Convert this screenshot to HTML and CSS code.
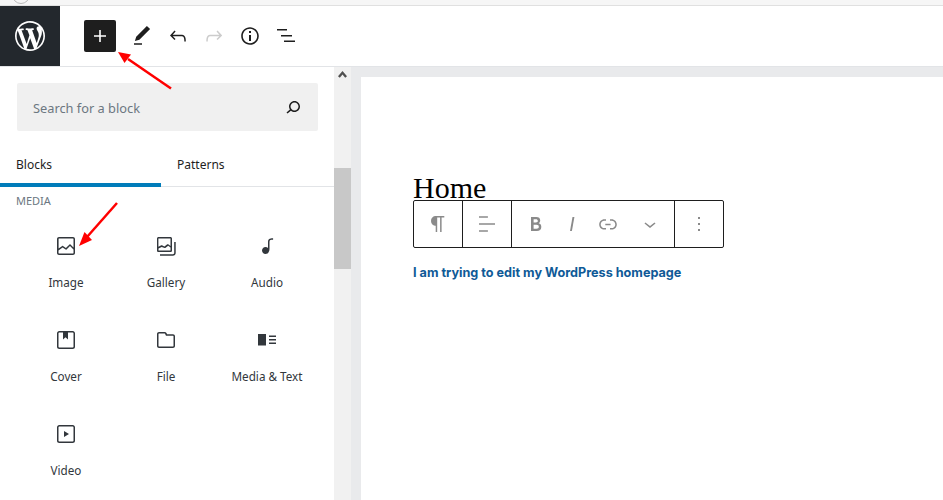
FILE: index.html
```html
<!DOCTYPE html>
<html lang="en">
<head>
    <meta charset="UTF-8">
    <meta name="viewport" content="width=device-width, initial-scale=1.0">
    <title>Edit Page</title>
    <link rel="stylesheet" href="styles.css">
</head>
<body>
    <div class="browser-strip"></div>

    <header class="topbar">
        <a class="wp-logo" href="#">
            <svg width="30" height="30" viewBox="0 0 20 20"><path fill="#fff" fill-rule="evenodd" d="M20 10c0-5.51-4.49-10-10-10C4.48 0 0 4.49 0 10c0 5.52 4.48 10 10 10 5.51 0 10-4.48 10-10zM7.78 15.37L4.37 6.22c.55-.02 1.17-.08 1.17-.08.5-.06.44-1.13-.06-1.11 0 0-1.45.11-2.37.11-.18 0-.37 0-.58-.01C4.12 2.69 6.87 1.11 10 1.11c2.33 0 4.45.87 6.05 2.34-.68-.11-1.65.39-1.65 1.58 0 .74.45 1.36.9 2.1.35.61.55 1.36.55 2.46 0 1.49-1.4 5-1.4 5l-3.03-8.37c.54-.02.82-.17.82-.17.5-.05.44-1.25-.06-1.22 0 0-1.44.12-2.38.12-.87 0-2.33-.12-2.33-.12-.5-.03-.56 1.2-.06 1.22l.92.08 1.26 3.41zM17.41 10c.24-.64.74-1.87.43-4.25.7 1.29 1.05 2.71 1.05 4.25 0 3.29-1.73 6.24-4.4 7.78.97-2.59 1.94-5.2 2.92-7.78zM6.1 18.09C3.12 16.65 1.11 13.53 1.11 10c0-1.3.23-2.48.72-3.59C3.25 10.3 4.67 14.2 6.1 18.09zm4.03-6.63l2.58 6.98c-.86.29-1.76.45-2.71.45-.79 0-1.57-.11-2.29-.33.81-2.38 1.62-4.74 2.42-7.1z"/></svg>
        </a>
        <div class="tools">
            <button class="add-btn">
                <svg width="24" height="24" viewBox="0 0 24 24"><path d="M18 11.2h-5.2V6h-1.6v5.2H6v1.6h5.2V18h1.6v-5.2H18z"/></svg>
            </button>
            <button class="tool-btn">
                <svg width="24" height="24" viewBox="0 0 24 24"><path d="M20.1 5.1L16.9 2 6.2 12.7l-1.3 4.400 4.500-1.300L20.100 5.100zM4 20.800h8v-1.500H4v1.500z"/></svg>
            </button>
            <button class="tool-btn">
                <svg width="24" height="24" viewBox="0 0 24 24"><path d="M18.3 11.7c-.6-.6-1.4-.9-2.3-.9H6.7l2.9-3.3-1.1-1-4.5 5L8.5 16l1-1-2.7-2.7H16c.5 0 .9.2 1.3.5 1 1 1 3.4 1 4.5v.3h1.5v-.2c0-1.5 0-4.3-1.5-5.7z"/></svg>
            </button>
            <button class="tool-btn disabled">
                <svg width="24" height="24" viewBox="0 0 24 24"><path d="M15.6 6.5l-1.1 1 2.9 3.3H8c-.9 0-1.7.3-2.3.9-1.4 1.5-1.4 4.2-1.4 5.6v.2h1.5v-.3c0-1.1 0-3.5 1-4.5.3-.3.7-.5 1.3-.5h9.2L14.5 15l1.1 1.1 4.6-4.6-4.6-5z"/></svg>
            </button>
            <button class="tool-btn">
                <svg width="24" height="24" viewBox="0 0 24 24"><path d="M12 3.2c-4.8 0-8.8 3.9-8.8 8.8 0 4.8 3.9 8.8 8.8 8.8 4.8 0 8.8-3.9 8.8-8.8 0-4.8-4-8.8-8.8-8.8zm0 16c-4 0-7.2-3.3-7.2-7.2C4.8 8 8 4.8 12 4.8s7.2 3.3 7.2 7.2c0 4-3.2 7.2-7.2 7.200zM11 17h2v-6h-2v6zm0-8h2V7h-2v2z"/></svg>
            </button>
            <button class="tool-btn">
                <svg width="24" height="24" viewBox="0 0 24 24"><path d="M3 5h10v1.500H3zM7 11h11v1.500H7zM10 16.500h11V18H10z"/></svg>
            </button>
        </div>
    </header>

    <div class="editor">
        <aside class="inserter">
            <div class="search-box">
                <span class="search-text">Search for a block</span>
                <svg width="24" height="24" viewBox="0 0 24 24"><path d="M13.5 6C10.5 6 8 8.5 8 11.5c0 1.1.3 2.1.9 3l-3.4 3 1 1.1 3.4-2.9c1 .9 2.2 1.4 3.6 1.4 3 0 5.5-2.5 5.5-5.5C19 8.5 16.5 6 13.5 6zm0 9.5c-2.2 0-4-1.8-4-4s1.8-4 4-4 4 1.8 4 4-1.8 4-4 4z"/></svg>
            </div>
            <div class="tabs">
                <div class="tab active">Blocks</div>
                <div class="tab">Patterns</div>
            </div>
            <div class="cat-title">MEDIA</div>
            <div class="block-grid">
                <div class="block-item">
                    <svg width="24" height="24" viewBox="0 0 24 24"><path d="M19 3H5c-1.1 0-2 .9-2 2v14c0 1.1.9 2 2 2h14c1.1 0 2-.9 2-2V5c0-1.1-.9-2-2-2zM5 4.500h14c.3 0 .5.2.5.5v8.400l-3-2.900c-.3-.3-.8-.3-1 0L11.900 14 9 12c-.3-.2-.6-.2-.8 0l-3.600 2.600V5c-.1-.3.1-.5.4-.5zm14 15H5c-.3 0-.5-.2-.5-.5v-2.400l4.100-3 3 1.900c.3.2.7.2.9-.1L16 12l3.500 3.400V19c0 .3-.2.500-.5.500z"/></svg>
                    <span>Image</span>
                </div>
                <div class="block-item">
                    <svg width="24" height="24" viewBox="0 0 24 24"><path d="M20.200 8v11c0 .7-.6 1.200-1.200 1.200H6v1.500h13c1.500 0 2.700-1.200 2.700-2.800V8h-1.500zM18 16.400V4.600c0-.9-.7-1.600-1.600-1.600H4.600C3.700 3 3 3.700 3 4.600v11.800c0 .9.700 1.600 1.600 1.600h11.800c.9 0 1.600-.7 1.600-1.600zM4.500 4.600c0-.1.1-.1.1-.1h11.800c.1 0 .1.1.1.1V12l-2.300-1.700c-.3-.2-.6-.2-.9 0l-2.900 2.100L8 11.300c-.2-.1-.5-.1-.7 0l-2.900 1.500V4.600zm0 11.800v-1.800l3.200-1.700 2.900 1.100c.2.100.5.100.7-.1l2.900-2.100 2.300 1.700v2.900c0 .1-.1.1-.1.1H4.600c0 0-.1 0-.1-.1z"/></svg>
                    <span>Gallery</span>
                </div>
                <div class="block-item">
                    <svg width="24" height="24" viewBox="0 0 24 24"><path d="M17.700 4.300c-1.200 0-2.800 0-3.800 1-.6.600-.9 1.500-.9 2.600V14c-.6-.6-1.500-1-2.500-1C8.600 13 7 14.600 7 16.500S8.600 20 10.500 20c1.500 0 2.800-1 3.300-2.300.5-.8.7-1.800.7-2.700V7.900c0-.7.2-1.200.5-1.600.6-.6 1.800-.6 2.800-.6h.3V4.300h-.4z"/></svg>
                    <span>Audio</span>
                </div>
                <div class="block-item">
                    <svg width="24" height="24" viewBox="0 0 24 24"><path d="M18.700 3H5.300C4 3 3 4 3 5.300v13.400C3 20 4 21 5.300 21h13.400c1.300 0 2.300-1 2.300-2.300V5.300C21 4 20 3 18.700 3zm.8 15.700c0 .4-.4.8-.8.8H5.300c-.4 0-.8-.4-.8-.8V5.300c0-.4.4-.8.8-.8h3.700v6.900l2.500-2.100 2.500 2.100V4.500h4.700c.4 0 .8.4.8.8v13.400z"/></svg>
                    <span>Cover</span>
                </div>
                <div class="block-item">
                    <svg width="24" height="24" viewBox="0 0 24 24"><path d="M19 6.200h-5.900l-.6-1.100C12.100 4.400 11.400 4 10.600 4H5c-1.100 0-2 .9-2 2v12c0 1.100.9 2 2 2h14c1.100 0 2-.9 2-2V8.200c0-1.100-.9-2-2-2zm.5 11.800c0 .3-.2.500-.5.500H5c-.3 0-.5-.2-.5-.5V6c0-.3.2-.5.5-.5h5.600c.2 0 .4.1.4.3l1 1.900H19c.3 0 .5.2.5.5V18z"/></svg>
                    <span>File</span>
                </div>
                <div class="block-item">
                    <svg width="24" height="24" viewBox="0 0 24 24"><path d="M3 6v11.500h8V6H3zm11 1.500h7V9h-7V7.500zm7 5h-7V11h7v1.500zm-7 3.500h7v-1.500h-7V16z"/></svg>
                    <span>Media &amp; Text</span>
                </div>
                <div class="block-item">
                    <svg width="24" height="24" viewBox="0 0 24 24"><path d="M18.700 3H5.300C4 3 3 4 3 5.300v13.400C3 20 4 21 5.300 21h13.400c1.300 0 2.300-1 2.300-2.300V5.300C21 4 20 3 18.700 3zm.8 15.700c0 .4-.4.8-.8.8H5.300c-.4 0-.8-.4-.8-.8V5.300c0-.4.4-.8.8-.8h13.400c.4 0 .8.400.8.8v13.400zM10 15l5-3-5-3v6z"/></svg>
                    <span>Video</span>
                </div>
            </div>
        </aside>

        <div class="scrollbar">
            <div class="scroll-arrow"></div>
            <div class="scroll-thumb"></div>
        </div>

        <main class="canvas-wrap">
            <div class="canvas">
                <h1 class="page-title">Home</h1>
                <div class="block-toolbar">
                    <div class="tb-group">
                        <svg width="24" height="24" viewBox="0 0 24 24"><path d="M18.300 4H9.900v-.1l-.9.2c-2.300.4-4 2.400-4 4.800s1.700 4.400 4 4.800l.7.1V20h1.500V5.500h2.900V20h1.500V5.500h2.700V4z"/></svg>
                    </div>
                    <div class="tb-group">
                        <svg width="24" height="24" viewBox="0 0 24 24"><path d="M4 19.800h8.900v-1.500H4v1.500zm8.900-15.600H4v1.500h8.900V4.200zm-8.900 7v1.500h16v-1.500H4z"/></svg>
                    </div>
                    <div class="tb-group wide">
                        <svg width="24" height="24" viewBox="0 0 24 24"><path d="M14.700 11.300c1-.6 1.500-1.600 1.500-3 0-2.300-1.300-3.400-4-3.400H7v14h5.800c1.400 0 2.500-.3 3.300-1 .8-.7 1.200-1.700 1.200-2.900.1-1.900-.8-3.100-2.600-3.700zm-5.100-4h2.300c.6 0 1.100.1 1.400.4.3.3.5.7.5 1.200s-.2 1-.5 1.200c-.3.3-.8.4-1.400.4H9.600V7.300zm4.600 9c-.4.3-1 .4-1.700.4H9.600v-3.900h2.900c.7 0 1.300.2 1.700.5.4.3.6.8.6 1.500s-.2 1.200-.6 1.500z"/></svg>
                        <svg width="24" height="24" viewBox="0 0 24 24"><path d="M12.500 5L10 19h1.900l2.500-14z"/></svg>
                        <svg width="24" height="24" viewBox="0 0 24 24"><path d="M15.600 7.200H14v1.500h1.600c2 0 3.700 1.700 3.700 3.700s-1.700 3.700-3.700 3.700H14v1.500h1.600c2.800 0 5.200-2.300 5.200-5.200 0-2.900-2.300-5.200-5.200-5.200zM4.700 12.400c0-2 1.700-3.700 3.700-3.700H10V7.200H8.400c-2.900 0-5.200 2.300-5.200 5.200 0 2.900 2.300 5.200 5.200 5.200H10v-1.500H8.400c-2 0-3.700-1.700-3.700-3.700zm4.600.9h5.300v-1.500H9.300v1.500z"/></svg>
                        <svg class="chevron" width="24" height="24" viewBox="0 0 24 24"><path d="M17.500 11.600L12 16l-5.500-4.400.9-1.200L12 14l4.500-3.600 1 1.200z"/></svg>
                    </div>
                    <div class="tb-group last">
                        <svg width="24" height="24" viewBox="0 0 24 24"><path d="M13 19h-2v-2h2v2zm0-6h-2v-2h2v2zm0-6h-2V5h2v2z"/></svg>
                    </div>
                </div>
                <p class="page-text">I am trying to edit my WordPress homepage</p>
            </div>
        </main>
    </div>

    <!-- red arrows drawn over the screenshot -->
    <svg class="arrow-overlay" width="943" height="500" viewBox="0 0 943 500">
        <path class="arrow-line" d="M171 88.500L128 59"/>
        <path class="arrow-head" d="M118 52L131 54.500L124.500 63z"/>
        <path class="arrow-line" d="M117 203L87 237"/>
        <path class="arrow-head" d="M79 246L84.500 232L92 240z"/>
    </svg>
</body>
</html>
```

FILE: styles.css
```css
* {
    box-sizing: border-box;
}
html, body {
    height: 100%;
}
body {
    margin: 0;
    padding: 0;
    height: 500px;
    overflow: hidden;
    background: #fff;
    font-family: "Noto Sans", "Open Sans", sans-serif;
    color: #1e1e1e;
    display: flex;
    flex-direction: column;
}
svg {
    display: block;
    fill: currentColor;
}
.browser-strip {
    position: relative;
    height: 6px;
    flex: none;
    overflow: hidden;
    background: #f6f6f6;
    border-bottom: 1px solid #e0e0e0;
}
.browser-strip::before {
    content: "";
    position: absolute;
    left: 12px;
    top: -14px;
    width: 16px;
    height: 16px;
    border: 1px solid #bbb;
    border-radius: 50%;
}
.topbar {
    height: 61px;
    flex: none;
    display: flex;
    border-bottom: 1px solid #e2e4e7;
}
.wp-logo {
    width: 60px;
    height: 60px;
    background: #23282d;
    display: flex;
    align-items: center;
    justify-content: center;
}
.tools {
    display: flex;
    align-items: center;
    padding-left: 24px;
}
.tools button {
    padding: 0;
    border: none;
    background: none;
    cursor: pointer;
    display: flex;
    align-items: center;
    justify-content: center;
    color: #1e1e1e;
}
.tools .add-btn {
    width: 32px;
    height: 32px;
    margin-right: 8px;
    background: #1e1e1e;
    color: #fff;
    border-radius: 2px;
}
.tools .tool-btn {
    width: 36px;
    height: 36px;
}
.tools .disabled {
    color: #ccc;
}
.editor {
    flex: 1;
    display: flex;
    min-height: 0;
}
.inserter {
    width: 334px;
    flex: none;
    background: #fff;
}
.search-box {
    height: 48px;
    margin: 16px 16px 0 17px;
    padding: 0 13px 0 16px;
    background: #f0f0f0;
    border-radius: 2px;
    display: flex;
    align-items: center;
    justify-content: space-between;
}
.search-text {
    padding-top: 2px;
    font-size: 12.8px;
    color: #6c7781;
}
.tabs {
    display: flex;
    height: 56px;
    border-bottom: 1px solid #e2e4e7;
}
.tab {
    width: 161px;
    height: 56px;
    padding: 25px 16px 0;
    font-size: 12px;
    line-height: 18px;
}
.tab.active {
    border-bottom: 4px solid #007cba;
}
.cat-title {
    padding: 6px 16px 0;
    font-size: 11px;
    line-height: 16px;
    color: #6c7781;
}
.block-grid {
    display: grid;
    grid-template-columns: 100px 100px 102px;
    grid-auto-rows: 94px;
    padding: 0 16px;
    margin-top: 14px;
}
.block-item {
    display: flex;
    flex-direction: column;
    align-items: center;
    padding-top: 11px;
    font-size: 11.7px;
    line-height: 18px;
    color: #32373c;
}
.block-item span {
    margin-top: 15px;
}
.scrollbar {
    width: 17px;
    flex: none;
    background: #f1f1f1;
    padding-top: 3px;
}
.scroll-arrow {
    width: 9px;
    height: 9px;
    margin: 0 auto 89px;
    clip-path: polygon(50% 10%, 100% 70%, 80% 85%, 50% 50%, 20% 85%, 0 70%);
    background: #505050;
}
.scroll-thumb {
    height: 101px;
    background: #c8c8c8;
}
.canvas-wrap {
    flex: 1;
    background: #e9eaec;
    padding: 10px 0 0 10px;
    min-width: 0;
}
.canvas {
    height: 100%;
    background: #fff;
    padding: 98px 0 0 52px;
}
.page-title {
    margin: 0;
    font-family: "Liberation Serif", serif;
    font-size: 30px;
    font-weight: normal;
    line-height: 25px;
    color: #000;
}
.block-toolbar {
    display: flex;
    width: 311px;
    height: 48px;
    background: #fff;
    border: 1px solid #1e1e1e;
    border-radius: 2px;
    color: #8a8a8a;
}
.tb-group {
    width: 49px;
    flex: none;
    display: flex;
    align-items: center;
    justify-content: center;
    border-right: 1px solid #1e1e1e;
}
.tb-group.last {
    width: 48px;
    border-right: none;
}
.tb-group.wide {
    width: 163px;
    gap: 12px;
}
.tb-group .chevron {
    margin-left: 6px;
}
.page-text {
    margin: 17px 0 0;
    font-family: Inter, "Open Sans", sans-serif;
    font-size: 12.65px;
    font-weight: 700;
    line-height: 16px;
    color: #0f5a97;
}
.arrow-overlay {
    position: absolute;
    left: 0;
    top: 0;
    pointer-events: none;
}
.arrow-line {
    fill: none;
    stroke: #f00;
    stroke-width: 2.5;
}
.arrow-head {
    fill: #f00;
}
```
